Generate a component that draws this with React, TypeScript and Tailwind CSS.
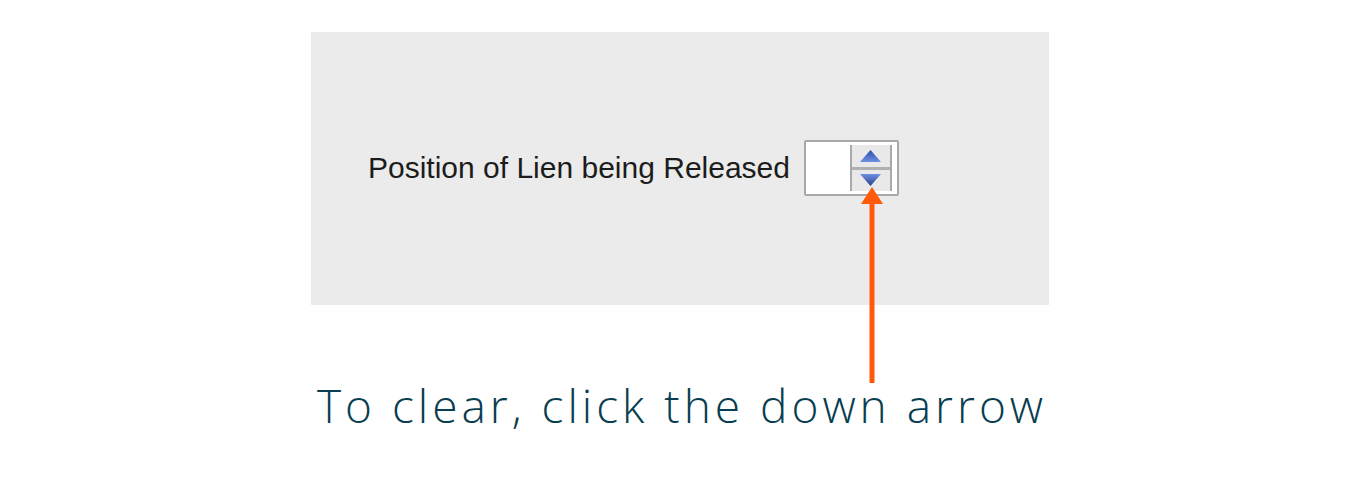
import React from "react";

function Spinner() {
  return (
    <div className="w-[95px] h-[56px] border-2 border-[#a9a9a9] bg-white flex justify-end pt-[3px] pb-[3px] pr-[5px] rounded-[2px]">
      <div className="w-[42px] h-full flex flex-col border-l-2 border-r-2 border-[#a9a9a9]">
        <div className="flex-1 bg-[#e9e9e9] flex items-center justify-center border-b-[3px] border-[#b0b0b0]">
          <svg width="21" height="12" viewBox="0 0 21 12">
            <defs>
              <linearGradient id="gu" x1="0" y1="0" x2="0" y2="1">
                <stop offset="0" stopColor="#2f4fa8" />
                <stop offset="1" stopColor="#6f8fe4" />
              </linearGradient>
            </defs>
            <polygon points="10.5,0 21,12 0,12" fill="url(#gu)" />
          </svg>
        </div>
        <div className="flex-1 bg-[#e9e9e9] flex items-center justify-center">
          <svg width="21" height="12" viewBox="0 0 21 12">
            <defs>
              <linearGradient id="gd" x1="0" y1="0" x2="0" y2="1">
                <stop offset="0" stopColor="#6f8fe4" />
                <stop offset="1" stopColor="#28408f" />
              </linearGradient>
            </defs>
            <polygon points="0,0 21,0 10.5,12" fill="url(#gd)" />
          </svg>
        </div>
      </div>
    </div>
  );
}

export default function App() {
  return (
    <div className="relative w-full h-[489px] bg-white flex flex-col items-center pt-[32px]">
      <div className="w-[738px] h-[273px] bg-[#ebebeb] flex items-start pl-[57px] pt-[108px] gap-[14px]">
        <span
          className="text-[30px] leading-[56px] text-[#1c1c1c]"
          style={{ fontFamily: '"Liberation Sans", Arial, sans-serif' }}
        >
          Position of Lien being Released
        </span>
        <Spinner />
      </div>
      <p
        className="mt-[72px] pl-[4px] text-[46px] leading-[56px] font-light text-[#083e50] tracking-[4px]"
        style={{ fontFamily: '"Open Sans", Lato, sans-serif' }}
      >
        To clear, click the down arrow
      </p>
      <svg
        className="absolute left-[860px] top-[187px]"
        width="24"
        height="196"
        viewBox="0 0 24 196"
      >
        <polygon points="12,0 23,17 1,17" fill="#ff5a0a" />
        <rect x="9.5" y="16" width="5" height="180" fill="#ff5a0a" />
      </svg>
    </div>
  );
}
